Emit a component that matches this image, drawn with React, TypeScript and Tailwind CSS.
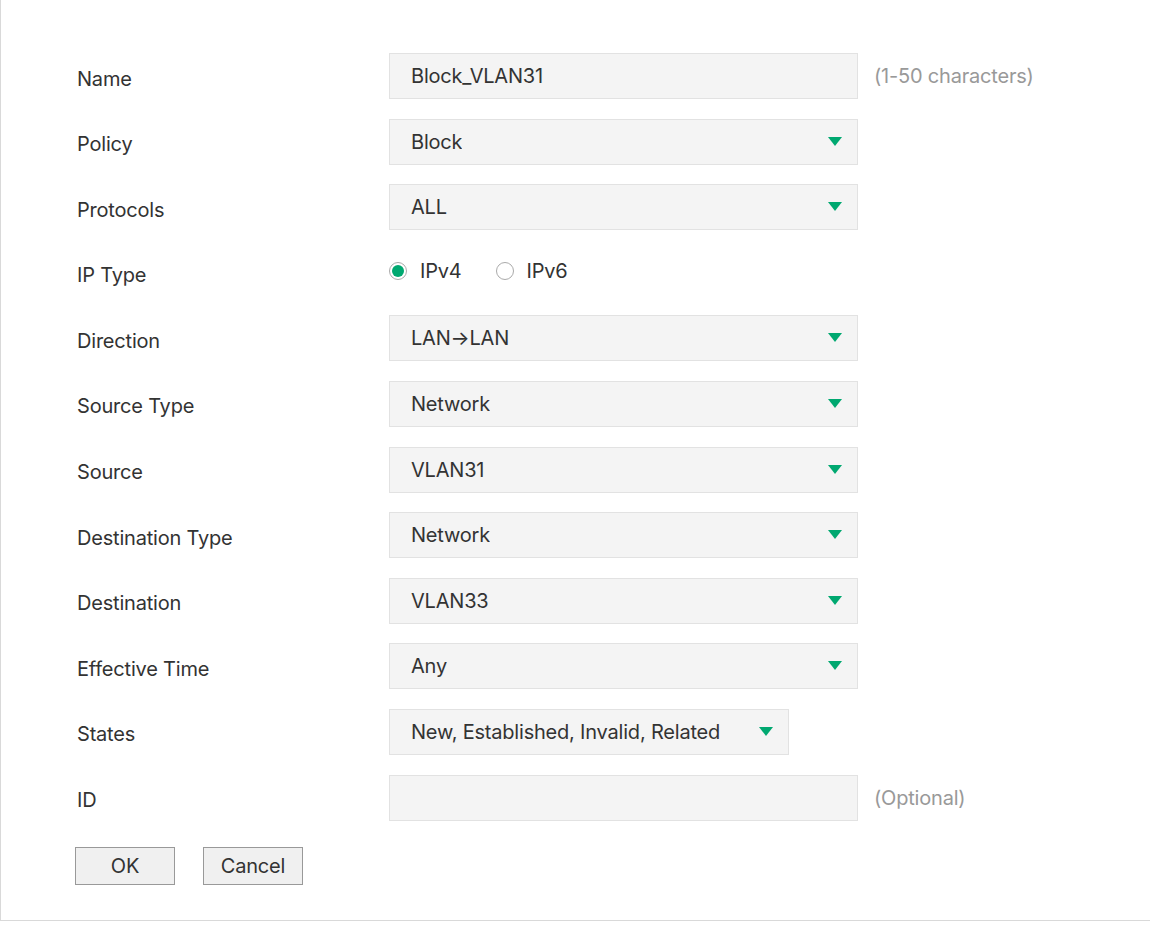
const Arrow = () => (
  <svg width="14" height="10" viewBox="0 0 14 10" className="shrink-0">
    <polygon points="0,0 14,0 7,9" fill="#00a870" />
  </svg>
);

type Row = { label: string; kind: "text" | "select" | "radio"; value?: string; hint?: string; w?: string };

const rows: Row[] = [
  { label: "Name", kind: "text", value: "Block_VLAN31", hint: "(1-50 characters)" },
  { label: "Policy", kind: "select", value: "Block" },
  { label: "Protocols", kind: "select", value: "ALL" },
  { label: "IP Type", kind: "radio" },
  { label: "Direction", kind: "select", value: "LAN\u2192LAN" },
  { label: "Source Type", kind: "select", value: "Network" },
  { label: "Source", kind: "select", value: "VLAN31" },
  { label: "Destination Type", kind: "select", value: "Network" },
  { label: "Destination", kind: "select", value: "VLAN33" },
  { label: "Effective Time", kind: "select", value: "Any" },
  { label: "States", kind: "select", value: "New, Established, Invalid, Related", w: "w-[400px]" },
  { label: "ID", kind: "text", value: "", hint: "(Optional)" },
];

export default function App() {
  return (
    <div className="h-[931px] w-[1150px] bg-white font-[Inter,sans-serif] text-[20px] tracking-[-0.2px] text-[#333]">
      <div className="h-[921px] border-b border-l border-[#d9d9d9] pt-[53px]">
        <div className="flex flex-col gap-[19.6px]">
          {rows.map((r) => (
            <div key={r.label} className="flex h-[46px] items-center">
              <div className="w-[388px] pl-[76px] pt-[5px]">{r.label}</div>
              {r.kind === "radio" ? (
                <div className="flex items-center gap-[34px] pb-[4px]">
                  <label className="flex items-center gap-[13px]">
                    <span className="flex h-[18px] w-[18px] items-center justify-center rounded-full border border-[#aaa]">
                      <span className="h-[12px] w-[12px] rounded-full bg-[#00a870]" />
                    </span>
                    IPv4
                  </label>
                  <label className="flex items-center gap-[13px]">
                    <span className="h-[18px] w-[18px] rounded-full border border-[#aaa]" />
                    IPv6
                  </label>
                </div>
              ) : (
                <>
                  <div
                    className={`flex h-[46px] ${r.w ?? "w-[469px]"} items-center justify-between overflow-hidden border border-[#e2e2e2] bg-[#f4f4f4] pl-[21px] pr-[15px]`}
                  >
                    <span className="min-w-0 overflow-hidden whitespace-nowrap">{r.value}</span>
                    {r.kind === "select" && <span className="pl-[16px]"><Arrow /></span>}
                  </div>
                  {r.hint && <span className="ml-[16px] text-[#999]">{r.hint}</span>}
                </>
              )}
            </div>
          ))}
        </div>
        <div className="mt-[26px] flex gap-[28px] pl-[74px]">
          <button className="h-[38px] w-[100px] border border-[#999] bg-[#f0f0f0] text-[20px]">OK</button>
          <button className="h-[38px] w-[100px] border border-[#999] bg-[#f0f0f0] text-[20px]">Cancel</button>
        </div>
      </div>
    </div>
  );
}
